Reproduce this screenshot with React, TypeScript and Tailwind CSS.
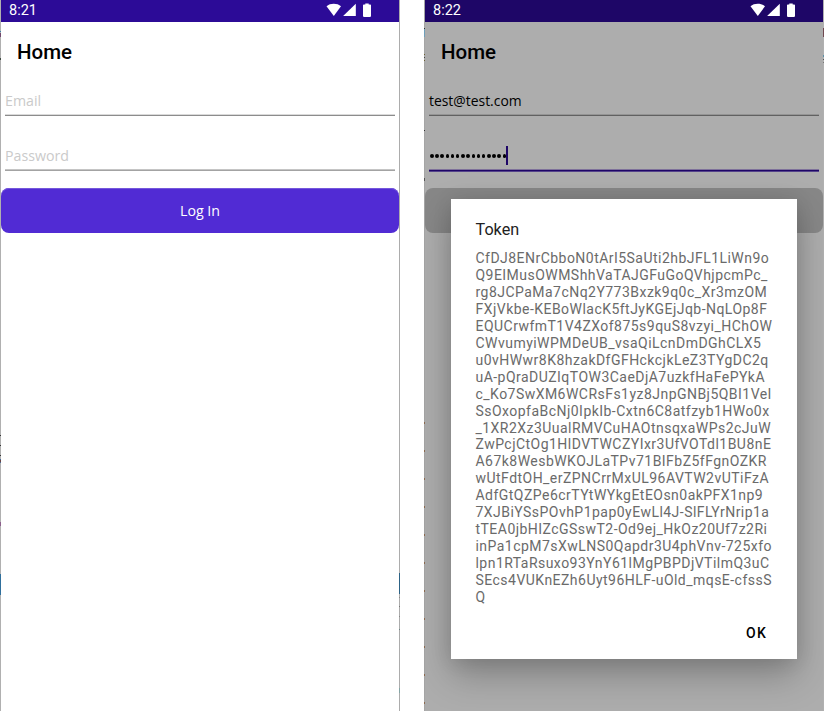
import React from "react";

const tokenLines = [
  "CfDJ8ENrCbboN0tArI5SaUti2hbJFL1LiWn9o",
  "Q9EIMusOWMShhVaTAJGFuGoQVhjpcmPc_",
  "rg8JCPaMa7cNq2Y773Bxzk9q0c_Xr3mzOM",
  "FXjVkbe-KEBoWlacK5ftJyKGEjJqb-NqLOp8F",
  "EQUCrwfmT1V4ZXof875s9quS8vzyi_HChOW",
  "CWvumyiWPMDeUB_vsaQiLcnDmDGhCLX5",
  "u0vHWwr8K8hzakDfGFHckcjkLeZ3TYgDC2q",
  "uA-pQraDUZIqTOW3CaeDjA7uzkfHaFePYkA",
  "c_Ko7SwXM6WCRsFs1yz8JnpGNBj5QBI1VeI",
  "SsOxopfaBcNj0IpkIb-Cxtn6C8atfzyb1HWo0x",
  "_1XR2Xz3UualRMVCuHAOtnsqxaWPs2cJuW",
  "ZwPcjCtOg1HlDVTWCZYIxr3UfVOTdl1BU8nE",
  "A67k8WesbWKOJLaTPv71BIFbZ5fFgnOZKR",
  "wUtFdtOH_erZPNCrrMxUL96AVTW2vUTiFzA",
  "AdfGtQZPe6crTYtWYkgEtEOsn0akPFX1np9",
  "7XJBiYSsPOvhP1pap0yEwLl4J-SlFLYrNrip1a",
  "tTEA0jbHIZcGSswT2-Od9ej_HkOz20Uf7z2Ri",
  "inPa1cpM7sXwLNS0Qapdr3U4phVnv-725xfo",
  "lpn1RTaRsuxo93YnY61lMgPBPDjVTilmQ3uC",
  "SEcs4VUKnEZh6Uyt96HLF-uOld_mqsE-cfssS",
  "Q",
];

type Mark = { gap: number; size: number; color: string };

const leftMarks: Mark[] = [
  { gap: 31, size: 1, color: "#3d7fa8" },
  { gap: 1, size: 4, color: "#70486c" },
  { gap: 21, size: 2, color: "#3f4a42" },
  { gap: 375, size: 1, color: "#333333" },
  { gap: 9, size: 1, color: "#333333" },
  { gap: 9, size: 1, color: "#333333" },
  { gap: 3, size: 1, color: "#4a6a94" },
  { gap: 0, size: 2, color: "#6a4545" },
  { gap: 0, size: 1, color: "#4a6a94" },
  { gap: 59, size: 4, color: "#8c5f8c" },
  { gap: 48, size: 21, color: "#2f6f9c" },
];
const leftEndMarks: Mark[] = [
  { gap: 573, size: 21, color: "#2c6285" },
  { gap: 3, size: 1, color: "#8a8a8a" },
  { gap: 8, size: 1, color: "#777777" },
  { gap: 9, size: 1, color: "#888888" },
  { gap: 12, size: 1, color: "#6f8585" },
  { gap: 58, size: 5, color: "#84a5a5" },
];
const rightMarks: Mark[] = [
  { gap: 28, size: 1, color: "#333333" },
  { gap: 0, size: 8, color: "#6f9fba" },
  { gap: 17, size: 1, color: "#6b6035" },
  { gap: 2, size: 1, color: "#444444" },
  { gap: 2, size: 1, color: "#6b6035" },
  { gap: 69, size: 1, color: "#333333" },
  { gap: 47, size: 3, color: "#555555" },
  { gap: 241, size: 2, color: "#8c6a50" },
  ...Array.from({ length: 10 }, () => ({ gap: 26, size: 2, color: "#8c6a50" })),
];
const rightEndMarks: Mark[] = [
  { gap: 28, size: 9, color: "#704850" },
  { gap: 18, size: 2, color: "#5c8fa5" },
  { gap: 2, size: 1, color: "#555555" },
  { gap: 2, size: 1, color: "#777777" },
];

function Edge({ marks, className }: { marks: Mark[]; className: string }) {
  return (
    <div className={`flex h-full w-px shrink-0 flex-col overflow-hidden ${className}`}>
      {marks.map((m, i) => (
        <div key={i} className="w-px shrink-0" style={{ height: m.size, marginTop: m.gap, background: m.color }} />
      ))}
    </div>
  );
}

function StatusBar({ time, dim }: { time: string; dim?: boolean }) {
  return (
    <div className={`flex h-[22px] items-start justify-between pl-2 pr-[27px] text-white ${dim ? "bg-[#1e0667]" : "bg-[#2c0b97]"}`}>
      <span className="font-[Roboto] text-[14.5px] leading-[22px]">{time}</span>
      <svg width="46" height="22" viewBox="0 0 46 22" fill="currentColor">
        <path d="M.5 6.3C4.2 3 11.3 3 15 6.3L7.8 16Z" />
        <path d="M29.8 3.8V16H17.1Z" />
        <path d="M39.3 3.6h3.4v.9h1.5q.8 0 .8.8v10.8q0 .8-.8.8h-6.4q-.8 0-.8-.8V5.3q0-.8.8-.8h1.5Z" />
      </svg>
    </div>
  );
}

function Heading() {
  return <h1 className="pl-4 font-[Roboto] text-[20.5px] font-medium leading-[60px] text-black">Home</h1>;
}

function LoginScreen() {
  return (
    <section className="flex h-full w-[400px] bg-white">
      <Edge marks={leftMarks} className="bg-[#b0b0b0]" />
      <div className="flex w-[398px] flex-col">
        <StatusBar time="8:21" />
        <Heading />
        <div className="mx-1 h-[34px] border-b border-[#8c8c8c] font-['Open_Sans'] text-[14.2px] leading-[38px] text-[#cacaca] shadow-[inset_0_-1px_#dadada]">Email</div>
        <div className="mx-1 mt-[21px] h-[34px] border-b border-[#a3a3a3] font-['Open_Sans'] text-[14.2px] leading-[38px] text-[#cacaca] shadow-[inset_0_-1px_#c5c5c5]">Password</div>
        <button className="mt-[17px] h-[45px] rounded-[8px] bg-[#512bd4] font-['Open_Sans'] text-[14.2px] text-white shadow-[inset_0_1px_#7557dc]">Log In</button>
      </div>
      <Edge marks={leftEndMarks} className="bg-[#acacac]" />
    </section>
  );
}

function TokenDialog() {
  return (
    <div className="absolute left-[27px] top-[199px] flex h-[460px] w-[346px] flex-col bg-white pl-[24.5px] font-[Roboto] shadow-[0_16px_34px_rgba(0,0,0,0.26),0_2px_18px_rgba(0,0,0,0.1)]">
      <h2 className="pt-[20px] text-[16.2px] leading-[22px] text-[#222]">Token</h2>
      <div className="mt-[9px] text-[14px] leading-[16.95px] tracking-[0.465px] text-[#6a6a6a]">
        {tokenLines.map((line) => (
          <div key={line} className="whitespace-nowrap">{line}</div>
        ))}
      </div>
      <button className="mr-[30px] mt-[17px] self-end text-[14px] font-medium leading-[20px] tracking-[1.27px] text-black">OK</button>
    </div>
  );
}

function TokenScreen() {
  return (
    <section className="relative flex h-full w-[400px] overflow-hidden bg-[#adadad]">
      <Edge marks={rightMarks} className="bg-[#a5a5a5]" />
      <div className="flex w-[398px] flex-col">
        <StatusBar time="8:22" dim />
        <Heading />
        <div className="mx-1 h-[34px] border-b border-[#616161] font-['Open_Sans'] text-[13.9px] leading-[38px] text-black shadow-[inset_0_-1px_#949494]">test@test.com</div>
        <div className="mx-1 mt-[20px] flex h-[35px] items-start border-b border-[#1e0667] shadow-[inset_0_-1px_#7e719a,0_1px_#54438a]">
          <div className="mt-[18px] flex gap-[1.7px] pl-px">
            {Array.from({ length: 15 }, (_, i) => (
              <span key={i} className="size-[3.5px] rounded-full bg-black" />
            ))}
          </div>
          <span className="mt-[10px] h-[19px] w-[2px] bg-[#1e0667]" />
        </div>
        <div className="mt-[17px] h-[45px] rounded-[8px] bg-[#878787]" />
      </div>
      <Edge marks={rightEndMarks} className="bg-[#b0b0b0]" />
      <TokenDialog />
    </section>
  );
}

export default function App() {
  return (
    <main className="flex h-[711px] w-[824px] justify-between overflow-hidden bg-white">
      <LoginScreen />
      <TokenScreen />
    </main>
  );
}
